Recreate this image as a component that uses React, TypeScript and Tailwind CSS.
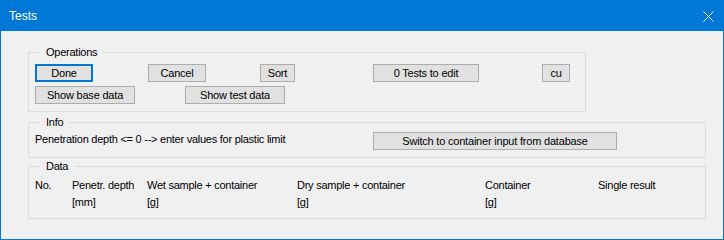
import React from 'react';

const font = { fontFamily: '"Liberation Sans", Arial, sans-serif' };

interface BtnProps {
    label: string;
    className?: string;
    focused?: boolean;
}

const Btn: React.FC<BtnProps> = ({ label, className = '', focused = false }) => (
    <button
        className={`h-[18px] shrink-0 bg-[#e1e1e1] text-[11px] leading-none tracking-[-0.2px] text-black flex items-center justify-center ${
            focused ? 'border-2 border-[#0078d7]' : 'border border-[#adadad]'
        } ${className}`}
    >
        {label}
    </button>
);

interface GroupProps {
    title: string;
    className?: string;
    children: React.ReactNode;
}

const Group: React.FC<GroupProps> = ({ title, className = '', children }) => (
    <fieldset className={`border border-[#dcdcdc] ${className}`}>
        <legend className="ml-[5px] px-[6px] text-[11px] leading-[13px]">{title}</legend>
        {children}
    </fieldset>
);

const columns = [
    { w: 'w-[37px]', head: 'No.', unit: '' },
    { w: 'w-[75px]', head: 'Penetr. depth', unit: '[mm]' },
    { w: 'w-[150px]', head: 'Wet sample + container', unit: '[g]' },
    { w: 'w-[188px]', head: 'Dry sample + container', unit: '[g]' },
    { w: 'w-[113px]', head: 'Container', unit: '[g]' },
    { w: 'w-[90px]', head: 'Single result', unit: '' },
];

export default function App() {
    return (
        <div
            className="w-[724px] h-[240px] bg-[#f0f0f0] border border-t-0 border-[#0078d7] flex flex-col text-black overflow-hidden"
            style={font}
        >
            {/* Title bar */}
            <div className="h-[31px] -mx-px bg-[#0078d7] flex items-center justify-between pl-[9px] pr-[10px] shrink-0">
                <span className="text-[12px] text-white">Tests</span>
                <svg width="11" height="11" viewBox="0 0 11 11" className="mt-[1px]">
                    <path d="M0.5 0.5 L10.5 10.5 M10.5 0.5 L0.5 10.5" stroke="white" strokeWidth="1" />
                </svg>
            </div>

            <div className="flex flex-col pl-[27px] pt-[15px] text-[11px] tracking-[-0.25px]">
                {/* Operations */}
                <Group title="Operations" className="w-[558px] h-[66px] pl-[6px] pt-[5px]">
                    <div className="flex">
                        <Btn label="Done" focused className="w-[58px]" />
                        <Btn label="Cancel" className="ml-[55px] w-[58px]" />
                        <Btn label="Sort" className="ml-[54px] w-[35px]" />
                        <Btn label="0 Tests to edit" className="ml-[78px] w-[106px]" />
                        <Btn label="cu" className="ml-[63px] w-[28px]" />
                    </div>
                    <div className="flex mt-[4px]">
                        <Btn label="Show base data" className="w-[100px]" />
                        <Btn label="Show test data" className="ml-[50px] w-[100px]" />
                    </div>
                </Group>

                {/* Info */}
                <Group title="Info" className="mt-[4px] w-[678px] h-[42px] pl-[6px] pt-[3px]">
                    <div className="flex items-center">
                        <span className="w-[338px] leading-[14px] -mt-[4px]">
                            Penetration depth &lt;= 0 --&gt; enter values for plastic limit
                        </span>
                        <Btn label="Switch to container input from database" className="w-[244px]" />
                    </div>
                </Group>

                {/* Data */}
                <Group title="Data" className="mt-[2px] w-[678px] h-[59px] pl-[6px] pt-[4px]">
                    <div className="flex leading-[17px]">
                        {columns.map((c) => (
                            <div key={c.head} className={`${c.w} flex flex-col shrink-0`}>
                                <span>{c.head}</span>
                                <span>{c.unit}</span>
                            </div>
                        ))}
                    </div>
                </Group>
            </div>
        </div>
    );
}
